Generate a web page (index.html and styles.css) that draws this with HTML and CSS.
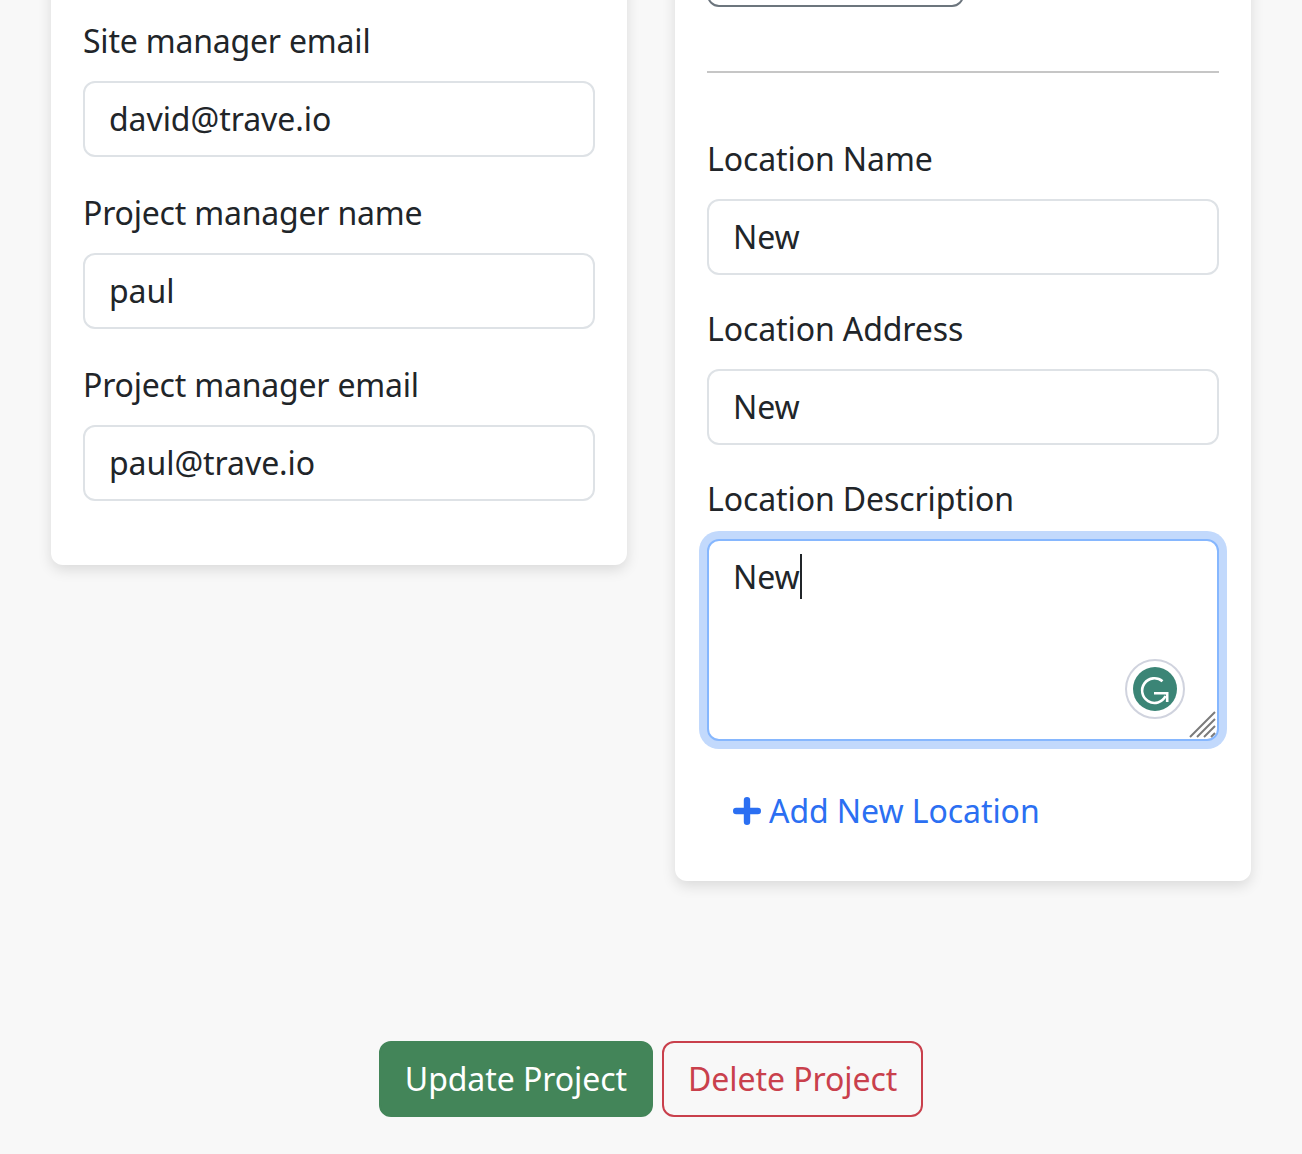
FILE: index.html
```html
<!DOCTYPE html>
<html lang="en">
<head>
<meta charset="utf-8">
<title>Update Project</title>
<link rel="stylesheet" href="styles.css">
</head>
<body>
<div class="viewport">
  <main class="columns">
    <section class="card card-left">
      <div class="field">
        <label class="label label-manager">Site manager email</label>
        <input class="control" value="david@trave.io">
      </div>
      <div class="field">
        <label class="label label-manager">Project manager name</label>
        <input class="control" value="paul">
      </div>
      <div class="field">
        <label class="label label-manager">Project manager email</label>
        <input class="control" value="paul@trave.io">
      </div>
    </section>
    <section class="card card-right">
      <div class="top-button"></div>
      <hr class="rule">
      <div class="field tight">
        <label class="label">Location Name</label>
        <input class="control" value="New">
      </div>
      <div class="field tight">
        <label class="label">Location Address</label>
        <input class="control" value="New">
      </div>
      <div class="field tight">
        <label class="label">Location Description</label>
        <div class="textarea">
          <span class="typed">New</span><span class="caret"></span>
          <span class="grammarly">
            <svg width="60" height="60" viewBox="0 0 60 60">
              <circle cx="30" cy="30" r="29" fill="#fff" stroke="#d0d3de" stroke-width="2"/>
              <circle cx="30" cy="30" r="22" fill="#3b8576"/>
              <path d="M37.5 22.3A12.3 12.3 0 1 0 40.5 37" fill="none" stroke="#fff" stroke-width="2.6"/>
              <path d="M29 34.2H42.2V43" fill="none" stroke="#fff" stroke-width="2.6"/>
            </svg>
          </span>
          <svg class="grip" width="28" height="28" viewBox="0 0 28 28">
            <path d="M2 27L27 2M9 27L27 9M16 27L27 16M23 27L27 23" stroke="#7b7b7b" stroke-width="2"/>
          </svg>
        </div>
      </div>
      <a class="add-link" href="#">
        <svg width="28" height="28" viewBox="0 0 28 28">
          <path d="M14 3.2V24.8M3.2 14H24.8" stroke="currentColor" stroke-width="6.4" stroke-linecap="round"/>
        </svg>
        <span>Add New Location</span>
      </a>
    </section>
  </main>
  <footer class="actions">
    <button class="btn btn-update">Update Project</button>
    <button class="btn btn-delete">Delete Project</button>
  </footer>
</div>
</body>
</html>
```
FILE: styles.css
```css
* { box-sizing: border-box; }
html, body { margin: 0; height: 100%; }
body {
  background: #f8f8f8;
  color: #212529;
  font-family: "Noto Sans", sans-serif;
  font-size: 32px;
  line-height: 48px;
  letter-spacing: -.07px;
  overflow: hidden;
}
.viewport { height: 1154px; overflow: hidden; }
.columns {
  display: flex;
  justify-content: center;
  align-items: flex-start;
  gap: 48px;
  margin-top: -101px;
}
.card {
  width: 576px;
  padding: 32px;
  background: #fff;
  border-radius: 12px;
  box-shadow: 0 5px 14px rgba(0, 0, 0, .12);
}
.card-left { padding-top: 118px; padding-bottom: 32px; }
.field { margin-bottom: 32px; }
.field.tight { margin-bottom: 30px; }
.field.tight:last-of-type { margin-bottom: 32px; }
.label { display: block; margin-bottom: 16px; height: 48px; letter-spacing: -.1px; }
.label-manager { letter-spacing: -.2px; }
.control, .textarea {
  display: block;
  width: 100%;
  height: 76px;
  padding: 12px 24px;
  border: 2px solid #dee2e6;
  border-radius: 12px;
  background: #fff;
  color: #212529;
  font: inherit;
  letter-spacing: inherit;
  outline: none;
}
.control { padding-top: 11px; padding-bottom: 13px; }
.textarea {
  position: relative;
  height: 202px;
  border-color: #86b7fe;
  box-shadow: 0 0 0 8px #c2d9fc;
}
.caret {
  display: inline-block;
  width: 2px;
  height: 45px;
  background: #212529;
  vertical-align: -10px;
}
.grammarly { position: absolute; right: 32px; bottom: 20px; width: 60px; height: 60px; }
.grammarly svg { display: block; }
.grip { position: absolute; right: 1px; bottom: 1px; }
.top-button {
  width: 257px;
  height: 76px;
  border: 2px solid #6c757d;
  border-radius: 12px;
}
.rule {
  height: 2px;
  margin: 64px 0 62px;
  border: 0;
  background: #c6c6c6;
}
.add-link {
  display: flex;
  align-items: center;
  gap: 8px;
  height: 76px;
  padding: 0 26px;
  color: #2b6ff2;
  text-decoration: none;
}
.actions {
  display: flex;
  justify-content: center;
  gap: 9px;
  margin-top: 160px;
}
.btn {
  height: 76px;
  padding: 0 24px;
  border: 2px solid;
  border-radius: 12px;
  font: inherit;
  letter-spacing: inherit;
}
.btn-update { background: #438559; border-color: #438559; color: #fff; }
.btn-delete { background: transparent; border-color: #c9404c; color: #c9404c; }
```
